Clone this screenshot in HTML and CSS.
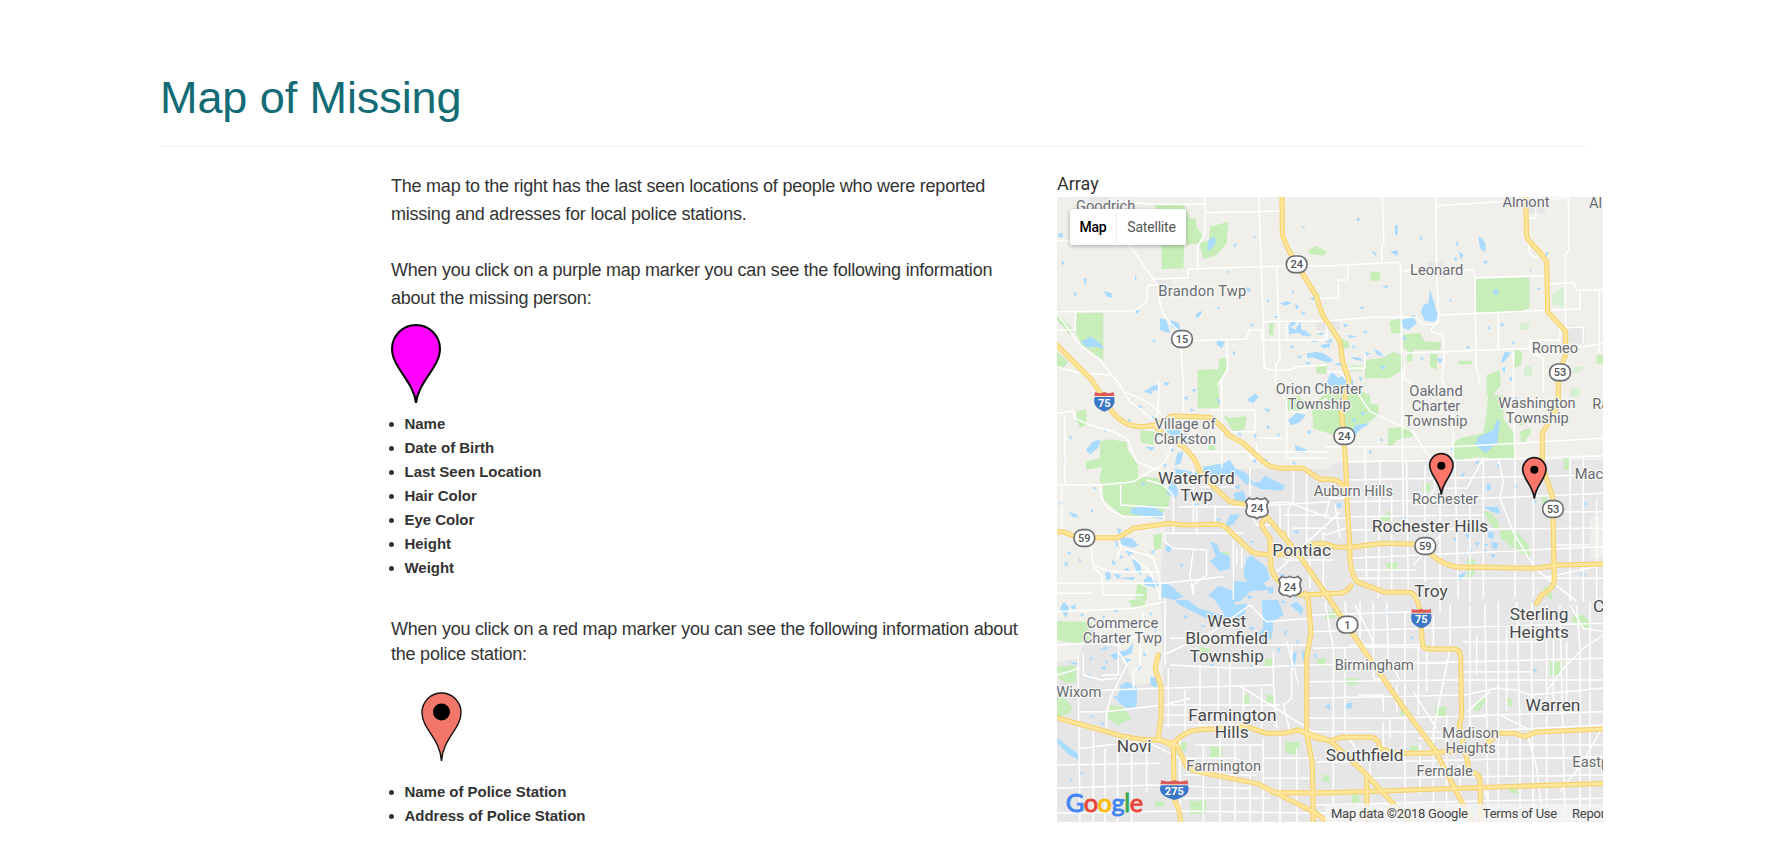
FILE: index.html
```html
<!DOCTYPE html>
<html lang="en">
<head>
<meta charset="utf-8">
<title>Map of Missing</title>
<link rel="stylesheet" href="styles.css">
</head>
<body>
<main class="page">
<h1 class="title">Map of Missing</h1>
<div class="columns">
<section class="info">
<p class="lead">The map to the right has the last seen locations of people who were reported<br>missing and adresses for local police stations.</p>
<p class="lead">When you click on a purple map marker you can see the following information<br>about the missing person:</p>
<svg class="pin-purple" viewBox="0 0 50 80"><path d="M25 79C23 58 1 43 1 25A24 24 0 0 1 49 25C49 43 27 58 25 79Z" fill="#f0f" stroke="#000" stroke-width="2"/></svg>
<ul class="facts"><li>Name</li><li>Date of Birth</li><li>Last Seen Location</li><li>Hair Color</li><li>Eye Color</li><li>Height</li><li>Weight</li></ul>
<p class="lead tight">When you click on a red map marker you can see the following information about<br>the police station:</p>
<svg class="pin-red" viewBox="0 0 41 70"><path d="M20.500 69C19 46 1 37 1 20.500A19.500 19.500 0 0 1 40 20.500C40 37 22 46 20.500 69Z" fill="#f3766a" stroke="#111" stroke-width="1.400"/><circle cx="20.500" cy="20" r="8.500"/></svg>
<ul class="facts"><li>Name of Police Station</li><li>Address of Police Station</li></ul>
</section>
<section class="map-col">
<div class="map-caption">Array</div>
<div class="map">
<svg class="map-art" viewBox="21 96 1638 1875">
<defs>
<g id="route"><rect x="-31" y="-25" width="62" height="50" rx="24" fill="#fff" stroke="#6b6e72" stroke-width="5"/></g>
<g id="us"><path d="M-24-30Q-12-22 0-30Q12-22 24-30L34-19Q26-8 33 8Q34 22 18 26Q6 26 0 32Q-6 26-18 26Q-34 22-33 8Q-26-8-34-19Z" fill="#fff" stroke="#6b6e72" stroke-width="5"/></g>
<g id="inter"><path d="M-29-12H29Q38 18 0 32Q-38 18-29-12Z" fill="#3c78c8"/><path d="M-28-27Q-14-20 0-27Q14-20 28-27L30-15H-30Z" fill="#df5a5a"/></g>
<g id="pin"><path d="M0 92C-3 52-35 34-35 4A35 35 0 0 1 35 4C35 34 3 52 0 92Z" fill="#fe7569" stroke="#181818" stroke-width="5"/><circle cy="5" r="12"/></g>
<g id="highways">
<path d="M696 90L697 210Q715 260 740 297L800 395Q815 455 835 475L870 530L878 590L897 645L875 745L887 895L893 1045L900 1145Q896 1215 920 1250Q960 1265 1005 1282H1080Q1105 1290 1112 1355L1117 1435Q1117 1452 1140 1452H1210Q1232 1452 1232 1480L1235 1655L1228 1680L1255 1805L1262 1822Q1290 1825 1290 1850L1293 1975"/>
<path d="M15 535L80 600L125 645L190 745Q225 785 275 785L320 780L365 753L480 757Q520 785 535 810L580 835L650 898Q670 910 700 910H760L810 943H840Q880 945 887 985"/>
<path d="M315 783L345 812L400 845Q435 875 450 920L490 965L540 1010L600 1020L650 1055L740 1160L840 1305L900 1395L955 1475L1065 1635L1155 1755L1268 1975"/>
<path d="M15 1100H40Q70 1115 100 1118H205L250 1090L360 1075L400 1080L500 1078Q525 1080 540 1100L605 1160Q620 1168 640 1168H740Q770 1135 820 1135L860 1147H900L1000 1135L1090 1137Q1130 1145 1145 1170Q1180 1200 1225 1207H1300L1455 1210L1530 1200L1665 1197"/>
<path d="M648 1058Q628 1072 640 1092L660 1120L663 1205Q670 1240 700 1260Q730 1290 760 1290L860 1285Q890 1285 903 1262M700 1105Q710 1135 745 1165"/>
<path d="M765 1285L775 1305L783 1405L770 1475V1705L787 1795L790 1975"/>
<path d="M1427 90L1430 215Q1440 235 1470 262L1490 290L1493 440L1547 500V570L1525 630V720L1477 805V905L1508 995L1513 1245Q1512 1270 1475 1290L1460 1315"/>
<path d="M15 1657L170 1700Q240 1725 320 1725L370 1735Q400 1700 440 1695L590 1685L650 1705H700L745 1695L800 1720L840 1727L875 1717H965Q985 1720 990 1750L1030 1765H1120L1195 1760L1300 1745L1345 1705H1395L1425 1715L1455 1702L1665 1692"/>
<path d="M325 1470L315 1510L333 1565V1655L325 1720L370 1745L372 1850L375 1910Q390 1930 392 1975M345 1730L380 1740L410 1805L440 1820L620 1855L790 1940L840 1975"/>
<path d="M670 1883H840L1230 1870L1665 1855M745 1695L840 1727L945 1825L1085 1975M950 1830V1975"/>
</g>
</defs>
<rect x="21" y="96" width="1638" height="1875" fill="#f0efea"/>
<path fill="#e6e6e6" d="M430 912H840L850 895L1290 885H1660V1050L1620 1060V1180H1660V1971H21V1490L90 1480L100 1420L190 1400L250 1560L340 1550L330 1240L345 1080V1000L430 960ZM120 96h65v20h-65zM315 345h50v30h-50zM1130 290h50v45h-50zM1425 125h60v20h-60zM1535 480h70v55h-70zM800 470h70v25h-70z"/>
<g fill="#c7edb9">
<path d="M308 118L400 115L420 160L437 158L440 190L462 215L445 235L402 240L400 310L335 312L334 240L350 160ZM480 185L535 170L530 235L500 270L460 282L447 235L478 225ZM80 443H160V585L95 540L77 500ZM21 445L72 495L60 510L21 465ZM21 560L55 590L40 610H21ZM443 615L505 612L510 580H530V610L505 660L508 730H443ZM775 255L800 243L830 260L820 272L780 266Z"/>
<path d="M657 475h14v35h-14zM962 320h28v27h-28zM1275 342L1438 337V430L1400 442H1278ZM1060 508L1110 505L1125 530H1175L1170 555H1090L1085 590L1070 588L1072 555L1060 550ZM945 585L1000 578L1030 560L1058 570V615L1015 640H945ZM1018 470L1055 458V505L1025 505ZM1310 630L1350 615L1352 660L1330 690H1310ZM1395 555L1418 560L1412 600L1393 610ZM1225 587h42v11h-42zM1640 570h19v26h-19zM800 600h30v26h-30zM1140 565l24 5-4 44-20-10zM875 520l22 12v18h-22z"/>
<path d="M150 830L175 823L230 830L235 860L262 895L265 935L335 940L360 990L355 1025L320 1060L215 1050L160 1005L158 955L148 950L155 905L108 915V890L150 880ZM80 738l28-5 3 45-20 10-11-20zM270 795l44 5-5 40-36-8zM520 750l20 8 50-4-6 40-35 6zM785 720L870 650L960 690V715L985 720V750L915 800L880 820L790 790ZM705 700l40-10 30 40-60 15zM475 840h20v15h-20zM310 1110l26-5-3 45-20 6zM510 1160l28 3-4 22-25-5z"/>
<path d="M1230 820L1300 805L1310 745L1315 690H1360V760L1395 810V880H1325L1280 875L1250 885H1208L1210 835ZM1015 790l60-6 16 30-50 10-15 20-12-4zM1010 1045L1020 1032 1020 1070 980 1065zM1350 1090L1400 1100L1435 1140L1440 1175L1410 1165L1352 1120ZM1295 1035l30 10 22 30v20l-20-10zM1470 990h20l5 30h-15zM1250 1180h20l8 20-10 45-15-5zM1005 1195l37-3v25h-25zM1120 955h23l-4 25h-20zM1540 880h20l-5 35h-13zM1480 1265h20l10 42-15-8zM1570 1350h30l25 25-5 20-55-25z"/>
<path d="M21 1368L130 1372L115 1395L125 1425L80 1435L21 1425ZM21 1590L45 1600L68 1630L60 1645L21 1655ZM180 1620L218 1625L245 1660L205 1680L172 1660ZM21 1505l55-4 3 50-30 3-25-15zM235 1305h50v20h-40zM445 1445l35 8 10 15-40-5zM577 1595l20-10v30h-20zM650 1590h22v22h-22zM480 1745h37v32h-37zM420 1907h50l-5 40h-43zM312 1910l30-2v17h-25zM385 1730l25 3-2 25-20-5zM645 1483l22-3v25h-22zM705 1732h45l-7 40-37-10z"/>
<path d="M825 1343l38-5-5 20-33 3zM885 1540h40v18h-40zM1052 1635l20-6v25h-20zM1155 1625h35v28h-35zM1270 1635l15-30 30-15-30 50zM1500 1490h40v40h-40zM1080 1742h22l4 18-28-4zM1370 1600h15v22h-15zM905 1890h22v25h-22zM1380 1870l22-2v16h-22zM1410 800l30-12 2 15-20 30-10-4zM1390 770l30-5-4 18zM262 1255l30 15-2 34h-35zM800 1485l25-8v30l-20-5zM820 1830h18v20h-18z"/>
</g>
<g fill="#d7efd2"><path d="M1510 385l35-18-4 40 4 20-40-10zM1410 475h30l-5 20-25-2zM1425 603h18l4 30h-25zM1575 605h30l-20 20-20-2zM900 600h35v20h-35zM1560 670h30v25h-30z"/></g>
<g fill="#a9daff">
<path d="M475 225l18-12 5 20-15 20-12 4zM92 530l30-15 30 20 10 18-22-8-30 2zM330 460l20 5 10 40-30-10zM362 465l25 10 5 25-30-15zM440 445l18-8-10 18-13 3zM1120 420l15-5 5-40 10 30 10 35 10 20-20 10-25-3-12-25zM1285 215l12 5 10 18-2 25-15-15zM1225 258l16 12-8 14zM1055 465l35-10 10 20-25 20-15-5zM845 620l20 20 25-15 20 20v25l-60 10-20-30zM790 560l30 5 30 20-15 8-45-15zM1158 578l20 5-8 12zM500 525l24 5-8 20-15-10z"/>
<path d="M108 855l20-25 24-7-7 25-25 20zM245 1030l60-10 35 25-5 18-40-8-55-10zM205 1115l40 5 20 20-15 8-35-8zM300 665l22-6 5 15-25 5zM590 705l25-20 10 10-15 20zM375 785l25 20 30 12-4 12-50-10-30-20zM382 865l18-5-8 35-18 7zM365 935l20 40-5 25-30-15zM375 910l70 15 10 20-40-8-35 2zM460 905l60-10 20-10 15 25 35 15 20 25-20 10-30-30-45 15-55-8zM600 955l30-5 15-18 60 30-8 15-65-5zM550 985l30-8 10 28-30 12zM735 840l35 15-5 10-28-4zM715 765l25-22 28 8-20 22-25 8zM540 1050l30-2-20 30-28 10zM480 1130l20 6 10 25 30 15v35l-30 8-30-30 18-15zM590 1180l15-8 45 35 10 35-20 12 20 20-60 5-30 30-50 8-45-25 30-30 45 15-4-30 45 5-10-35zM335 1255l25 5 40 35-25 10-40-8zM245 1180l25 12 5 40-15-10zM325 1465h10l-3 20zM635 1305h50l15 45-30 20-5 50-35 20-20-20 30-30zM375 1305h40l30 25 70 20 45-30 30-5-5 35-50 25-60-12-90-45zM490 1300h50l25 30-40 20zM30 1330l12-20 15 15-8 35zM205 1240l50-5-5 10zM290 1230l40 25-10 15-30-10zM720 1320l20-10 20 20-5 20zM755 1460l15-5-10 35zM725 1470l15-12-5 50-15-2z"/>
<path d="M212 1560l20-10 30 20-3 55-30 5-28-22zM180 1470l50-15 20-20-5 30-50 20zM22 1720l60 45 5 20-30-15-35-35zM300 1535l25 5-5 30-18-10zM150 1455l20-12 5 10zM1275 840l10-25 45-20 10-30 10 3-8 65-35 30zM895 820l20-40 45-5-25 15-25 25zM1300 1025l45 0 5 20-25-4zM1315 1100l18 3-5 20-15-5zM1325 1130l20 5-5 20-15-8zM1225 1230l25-10-15 25-15 4zM1270 900l20-20-4 15zM1395 695l10 10-5 30-15-10zM1450 1512h10v10h-10zM890 1615l20-2-5 15-20 5zM825 1625l15-10v20z"/>
<path d="M715 480l20 15 15-25 5 25 30 15-12 5-30-12-25 5zM770 565l30-4 3 14-30 5zM810 540l30-5v12l-20 3zM690 415l20-6 15 5-20 8zM735 415l12 10-8 10zM590 365l15 10-12 10zM550 240l10-8-4 18zM100 340l10 2-4 22zM160 378l24 6 3 14-16-3zM70 380l10 6-5 12zM35 285l9 8-8 10zM300 523l18 4-2 7zM255 430l14 8-11 10zM25 205h14v12h-14zM925 155l6 12h-12zM1035 180h8v30h-8zM965 260h10l4 15zM1020 260l25-5-4 17zM1300 285l14 3-9 12zM1485 265l10-4-5 16zM995 365l20-5-4 10zM1330 372l15 2-2 16-12-2zM925 425l20 1-8 7zM890 510l30 4-20 6zM970 550l18 10 15 15-20-5zM1385 530h12l-8 10zM1365 560l18 3-22 30-8-3zM1250 543h8v8h-8zM1310 490l8-6 4 10zM925 635l12 2-4 14z"/>
<path d="M280 680l20-10 7 18zM285 845l30 2-10 10zM500 700l12 5-5 14zM560 800l10-4 3 20zM640 730l20 3-4 12zM55 1040l25 8 5 10-18-3zM30 1010h8v10h-8zM350 1140l15 2-4 20-15-4zM200 1090l15 4-8 15zM40 1195l15-5-4 15zM85 1180l10 5-6 8zM165 1225l16-6 2 20-12 8zM50 1160l16 4-10 6zM730 1100l20-6-10 14zM690 1230l14-4-3 16zM655 1265h15v20h-15zM1310 960l12-4v20h-12zM1180 940l18-8-3 14zM1055 1050h12v12h-12zM860 1015h14v14h-14zM1390 960h12v8h-12zM1600 1010l12 6-8 8zM1300 1150l10 5-4 14zM1010 1320l6 30h-8zM1080 1420l12-10-3 14zM1590 1225h15v15zM845 1330l16 3-10 6zM120 1395l18 3-7 8zM120 1650l10 3-5 8zM150 1670l12 4-5 8zM55 1490l30 4-8 6zM110 1530l12-4-2 12zM590 1460l15 5-8 12zM700 1400l10-5v20z"/>
<path d="M255 328l6 18h-6zM525 320l12-3-5 8zM610 212l8 4-6 6zM690 163l8 3-5 6zM755 185l10-3-3 9zM500 425l12 5-8 4zM600 480l10-6v12zM550 555l8 12-9 3zM650 400l8 8-6 5zM725 375l8 5-6 6zM780 400l16-5-6 12zM755 440l14 4-12 7zM670 455l18-5-8 10zM720 540l14 4-9 8zM745 500l20-5 10 12-18 5zM730 465l10 8-15 12-8-6zM785 530l12-8 6 10zM740 575l15-4-5 10zM765 590l20 3-12 8zM800 510l18-10 2 10zM825 530l20-8v12zM850 600l25-10 2 12zM905 540l12 4-6 8zM935 500l18-3-6 9zM880 475l16 6-14 6zM1080 450l20 2-8 8zM1110 575l12 4-7 8zM900 575l30 3 10 10-24-3zM945 560l16 6-12 6zM990 600l18 6-10 9zM1055 520l12-6v14zM1200 400l6 10h-8zM1350 480l12-8-3 14zM1355 610l12-4-4 20zM1375 640l14-6-6 16zM1220 225l6 14-7 4zM1212 275l12 6-10 8zM1112 210l6 14h-8zM1440 310l5 6-5 4zM1460 370l14-3-7 8z"/>
<path d="M195 1120l10 18-6 10zM225 1155l25 8-14 9zM185 1185l14 8-10 9zM190 1225l24 6-10 12zM220 1215l14-8 4 12zM280 1240l14 4 4 20-14-4zM300 1160l14-6-4 14zM210 1170l12 8-12 3zM420 1160l12-5-2 16zM390 1195l12 4-9 9zM580 1225l14 8-10 10zM600 1125l16 6-10 4zM680 1150l12-3-4 15zM700 1280l10 10-14 3zM590 1290l20 6-14 8zM640 880l16 5-10 6zM605 890l12-8 2 12zM540 920l10 4 5 18-12-3zM480 935l20-4-6 12zM510 950l12 10-14 4zM405 985l10-3 2 12zM425 950l20 2-12 10zM550 965l20-6-3 14zM430 1020l18-5-8 12zM590 1010l14-4-4 12zM500 1060l14 3-10 8zM130 965l12 4-10 5zM125 1030l6 10h-8zM275 950l14 8-14 3zM340 895l12 5-10 8zM360 850l15 2-9 9zM300 760l12-8 3 14zM265 720l14 5-10 7zM235 760l10 8-10 4zM160 790l10 3-7 9zM60 810l8 8-10 6zM40 880l8 3-6 11zM420 730l12 4-8 8zM425 675l14-5-5 14zM340 650l20 4-12 10zM400 700l12-8 2 16zM650 780l12 6-9 8zM680 805l12 3-8 8zM610 810l10-4-2 16zM770 800l14-5-5 15zM725 895l10-7 3 12z"/>
<path d="M90 1345l14 4-9 7zM60 1325l18-8-4 18zM155 1350l12 4-7 8zM190 1335l14-3-6 12zM300 1340l10 6-9 6zM310 1390l12-4-4 16zM225 1480l20 4-14 10zM150 1510l16-8v15zM260 1500l14 3-6 14zM280 1460l10 10-10 6zM165 1485l10 4-7 10zM120 1475l8 5-6 9zM245 1590l14 6-6 10zM190 1595l12-3-3 14zM400 1350l14 4-9 9zM450 1380l18 2-8 8zM595 1385l20 2-8 10zM605 1430l14-4-2 14zM680 1450l12-4-4 18zM740 1420l8 12-8 6zM690 1310l12-4 6 12zM730 1290l14 4-8 9zM790 1470l10-4v18zM600 1500l12 4-9 7zM480 1500l14-5-6 14zM90 1820l12 3-8 7zM60 1840l10 3-6 7z"/>
<path d="M1245 1110l14-5-4 18zM1275 1130l14 4-8 12zM1210 1120l10-4-1 16zM1320 1165l16 5-8 10zM1300 1135l14 3-5 9zM1260 1150l8 3-6 10zM1165 1110l12 4-9 7zM1240 1160l12 4-8 6zM1085 985l8-4v10zM1340 900l12-4-6 12zM1450 1005l12 4-8 6zM1475 860l10 3-7 9zM955 860l10-4-2 15zM905 760l16 4-9 10zM930 745l14-5-3 12zM990 820l10 4-7 7zM1200 850l10-6-2 14zM1230 930l14-9-4 14z"/>
</g>
<g class="minor">
<path d="M465 96V205L443 245V310M180 105L300 118H463M468 143L690 138M626 96L640 470L642 600Q645 615 665 615H720L740 605L830 600M21 228H230L245 250L320 355L330 410Q335 460 390 500L400 660V740M305 343L415 338V312L700 303H825L1040 292Q1052 295 1052 310L1060 1100M320 360H295Q290 365 290 380V410L255 437L21 440M680 303L690 580L677 600V660L710 710V880M640 470L830 468L960 457H1100L1115 478H1160L1165 450L1590 432V378M430 527L590 522L597 495H635V525H830M532 528V615L503 660M21 445L90 540L150 585L185 630L215 665M21 605L90 625L185 630M76 445V495H21M710 475V520M810 400H840M893 297V345H865V400H830M830 465V525"/>
<path d="M997 96L1002 235L995 245V290M1158 96L1160 330L1167 470L1145 490V500L1180 510L1182 590L1175 640L1210 745V885M1162 122L1430 105L1555 100L1557 255L1546 270V430L1550 600M1060 320L1080 315H1265L1275 330L1278 600L1290 660M1275 338L1490 332M1490 358L1570 352L1580 375H1660M1648 375V560M1345 445V550M1065 565L1380 552L1600 545L1660 535M1390 560V670L1395 900M1440 525H1530V490L1600 485V535M1440 525V560L1480 580V680M1436 215V255Q1440 275 1465 278M1430 160H1457V130M830 620H870L920 680L960 740L1090 800L1120 850L1150 890L1155 970L1130 1010L1100 1020M885 610H945V565M1065 600L1060 640L1090 660"/>
<path d="M21 745L70 738L75 760L120 780L190 800L230 820L260 890L320 915L345 890L370 830M45 750V960M21 960H150L250 950L325 905M150 960Q150 1005 175 1030L220 1055H345M35 960V1100M212 960V1020L300 1025L360 1030M290 945L340 960L370 990V1110M225 680L290 710L330 740V750M325 645Q330 720 315 770M200 645L240 710L330 780M515 645V910M480 735H615V800H540M410 860H830M430 915V1075M600 990V910M625 820H700M620 835V870L600 880V850M555 965H450M385 1025H590L840 1010M440 1020V1110M495 1020V1075M600 1040L620 1080H660M345 1105H580M345 1105V1130L370 1150L470 1155M550 1125V1305M470 1155V1230L430 1260V1290M430 1155L420 1230L430 1290M560 1150V1200M575 1150V1210M120 1120L130 1200L180 1220H330M205 1120L215 1150L290 1170L310 1180L330 1240V1305M215 1145L200 1180M245 1175L300 1220L330 1290M21 1255H345L520 1235M130 1205L155 1230L160 1290H280M21 1285H130"/>
<path d="M715 880L830 880M710 740H760L830 700M730 910V1010L715 1030V1120M770 910V1140M660 1015L710 1010L840 1060M690 1020V1110M700 1050H840M725 1090H830M740 1160L850 1060L870 1040M680 1220L735 1170M700 1185H850M780 1165V1270M820 1100V1300M850 960L825 1060M840 1000H890M840 1060H900M825 1110L900 1085M855 1020L870 1120"/>
<path d="M825 845H1210L1660 820M887 890L1280 885L1660 872M890 945L1240 938L1660 930M890 1010L1180 1005L1660 985M895 1055L1300 1050M900 1095L1660 1090M900 1180L1660 1145M900 1215L1100 1215M910 1240L1660 1240M945 845L950 1245M990 890L985 1300M1025 960V1290M1070 885L1075 1290M1125 900V1250M1170 1000V1340M1215 880L1225 1300M1260 1000V1310M1300 880V1300M1345 880L1360 950L1350 1000L1390 1100L1430 1170L1455 1210L1580 1310M1395 890V1300M1450 890V1300M1560 870V1310M1600 870V1310M1640 1000V1310M1475 1240L1660 1200M1515 1040H1660M1515 1140H1620M1090 1200L1180 1100L1260 1070M1180 970L1250 970L1300 880M1130 1010H1260L1290 990"/>
<path d="M21 1340L250 1330L345 1310M21 1440L120 1435L205 1440L280 1400V1340M345 1300V1500M205 1460L230 1500L185 1590L170 1640V1700M100 1465V1530L155 1545L200 1540M205 1440V1530H155M85 1470V1580L90 1970M21 1580L330 1570L670 1560M165 1640L340 1620H690M90 1640H165M21 1530L90 1510M250 1570V1520L270 1500V1440M90 1750L300 1725M21 1800L330 1795M130 1690V1971M165 1750V1971M203 1700V1971M245 1740V1971M290 1720V1880M21 1870L300 1860L600 1870M21 1945L390 1938L840 1945M340 1470L480 1405L600 1320L650 1370L780 1360M360 1500L560 1510L770 1500M360 1420H500L580 1440H780M355 1510V1690M405 1575V1700M450 1500V1690M505 1510V1680M540 1490V1690M580 1560V1680M635 1560V1700M670 1550L680 1690M565 1560L790 1700M725 1440V1600L700 1620L720 1700M670 1460V1550M710 1430L745 1555M340 1620L420 1600M390 1710V1971M435 1740H640M460 1740V1971M510 1720V1971M555 1700V1971M600 1740V1971M640 1720V1971M690 1700V1971M740 1750V1971M640 1780H800M400 1780H560L640 1820M300 1735L390 1780M400 1830H620M640 1840H780M400 1900H660M340 1680H600M340 1650H460"/>
<path d="M785 1350L1110 1340M780 1400L1660 1375M790 1450L980 1445L1200 1450M780 1500L1070 1495L1660 1480M775 1550L1230 1545L1660 1545M775 1600L1240 1590L1340 1570L1400 1575L1440 1590L1660 1570M775 1660L1020 1660L1660 1640M775 1700H1240M1000 1790L1660 1775M800 1790H950M950 1840L1660 1830M790 1920L1660 1900M800 1960H1660M825 1310L850 1450V1971M885 1310L890 1390M885 1450V1700L1000 1700M970 1310V1540L1030 1550M1010 1310L1015 1480L1050 1545M915 1320L970 1430M1065 1340V1971M1105 1450V1650M1150 1350V1450M1200 1450L1150 1700V1971M1090 1580L1160 1690M1040 1560V1640M1190 1650V1971M1260 1320V1700M1305 1320L1315 1971M1345 1310V1971M1400 1310L1410 1700V1971M1445 1315V1560L1450 1971M1490 1320V1971M1530 1320L1545 1971M1580 1320L1590 1450V1971M1620 1310V1971M1560 1320L1600 1390L1660 1400M1490 1580L1540 1510L1600 1450L1660 1410M1250 1640L1320 1580M1270 1700L1660 1680M1430 1700L1460 1810L1480 1971M1530 1880L1600 1790L1660 1680M1240 1520H1440M1260 1740H1660M1300 1860L1330 1971"/>
<path d="M900 1440H1110V1310M925 1590H1000V1640M930 1310V1420M1000 1670V1750M1020 1660V1720M960 1760V1830M930 1820V1760M885 1700L935 1780M1105 1720H1230M1110 1735V1890M1230 1800V1960M1370 1720V1830M1240 1430H1480M1370 1390V1640M1200 1320V1440M1280 1410V1530M1510 1420V1640M1550 1430V1640M1130 1460V1580M1350 1650L1430 1690"/>
</g>
<use href="#highways" class="casing"/><use href="#highways" class="highway"/>
<g class="town">
<text x="167" y="138">Goodrich</text><text x="457" y="392" textLength="264">Brandon Twp</text><text x="1160" y="330">Leonard</text><text x="1428" y="126">Almont</text><text x="1617" y="129" class="start">Al</text><text x="1515" y="564">Romeo</text>
<text x="808" y="687">Orion Charter</text><text x="808" y="733">Township</text><text x="405" y="793">Village of</text><text x="405" y="838">Clarkston</text><text x="1158" y="692">Oakland</text><text x="1158" y="738">Charter</text><text x="1158" y="783">Township</text><text x="1461" y="728">Washington</text><text x="1462" y="773">Township</text><text x="1627" y="731" class="start">Ra</text><text x="1574" y="943" class="start">Mac</text><text x="910" y="992">Auburn Hills</text><text x="1185" y="1018">Rochester</text>
<text x="217" y="1388">Commerce</text><text x="217" y="1433">Charter Twp</text><text x="19" y="1596" class="start">Wixom</text><text x="521" y="1819">Farmington</text><text x="973" y="1515">Birmingham</text><text x="1262" y="1718">Madison</text><text x="1262" y="1763">Heights</text><text x="1184" y="1834">Ferndale</text><text x="1567" y="1807" class="start">Eastp</text>
</g>
<g class="city">
<text x="439" y="957">Waterford</text><text x="440" y="1009">Twp</text><text x="667" y="1174" class="start">Pontiac</text><text x="1140" y="1102">Rochester Hills</text><text x="1143" y="1296">Troy</text><text x="530" y="1385">West</text><text x="530" y="1438">Bloomfield</text><text x="530" y="1490">Township</text><text x="547" y="1667">Farmington</text><text x="545" y="1720">Hills</text><text x="252" y="1761">Novi</text><text x="944" y="1788">Southfield</text><text x="1467" y="1365">Sterling</text><text x="1467" y="1418">Heights</text><text x="1509" y="1637">Warren</text><text x="1629" y="1341" class="start">C</text>
</g>
<g class="shields">
<g transform="translate(740 298)"><use href="#route"/><text y="12">24</text></g><g transform="translate(396 522)"><use href="#route"/><text y="12">15</text></g><g transform="translate(1530 622)"><use href="#route"/><text y="12">53</text></g><g transform="translate(883 813)"><use href="#route"/><text y="12">24</text></g><g transform="translate(103 1119)"><use href="#route"/><text y="12">59</text></g><g transform="translate(1126 1143)"><use href="#route"/><text y="12">59</text></g><g transform="translate(1509 1032)"><use href="#route"/><text y="12">53</text></g><g transform="translate(892 1379)"><use href="#route"/><text y="12">1</text></g>
<g transform="translate(621 1029)"><use href="#us"/><text y="13">24</text></g><g transform="translate(720 1264)"><use href="#us"/><text y="13">24</text></g>
<g class="interstate"><g transform="translate(163 708)"><use href="#inter"/><text y="17">75</text></g><g transform="translate(1114 1358)"><use href="#inter"/><text y="17">75</text></g><g transform="translate(373 1873)"><use href="#inter" transform="scale(1.400 1)"/><text y="17">275</text></g></g>
</g>
<use href="#pin" transform="translate(1174 897)"/><use href="#pin" transform="translate(1453 909)"/>
<text class="logo" x="47" y="1942" textLength="232"><tspan fill="#4285f4" stroke="#4285f4">G</tspan><tspan fill="#ea4335" stroke="#ea4335">o</tspan><tspan fill="#fbbc05" stroke="#fbbc05">o</tspan><tspan fill="#4285f4" stroke="#4285f4">g</tspan><tspan fill="#34a853" stroke="#34a853">l</tspan><tspan fill="#ea4335" stroke="#ea4335">e</tspan></text>
</svg>
<div class="map-types"><span class="type active">Map</span><span class="type">Satellite</span></div>
<div class="credits"><span>Map data ©2018 Google</span><span>Terms of Use</span><span>Repor</span></div>
</div>
</section>
</div>
</main>
</body>
</html>
```
FILE: styles.css
```css
html, body { margin: 0; height: 857px; overflow: hidden; background: #fff; }
body { font-family: "Liberation Sans", Arial, sans-serif; color: #333; }
.page { width: 1425px; margin-left: 160px; padding-top: 72px; }
.title { margin: 0; height: 74px; border-bottom: 1px solid #eee; font-size: 45px; line-height: 52px; font-weight: 400; letter-spacing: -0.08px; color: #126b75; }
.columns { display: grid; grid-template-columns: 635px 546px; gap: 31px; padding-left: 231px; }
.info { padding-top: 25px; }
.lead { margin: 0 0 28px; font-size: 18px; line-height: 28px; letter-spacing: -0.228px; white-space: nowrap; }
.lead.tight { line-height: 25px; margin: 37px 0 25px; }
.pin-purple { display: block; width: 50px; height: 80px; margin-top: -16px; }
.pin-red { display: block; width: 41px; height: 70px; margin: 0 0 18px 30px; }
.facts { list-style: none; margin: 8px 0 0; padding: 0; font-size: 15px; line-height: 24px; font-weight: 700; letter-spacing: -0.03px; }
.facts li { display: flex; align-items: center; gap: 10.500px; margin-left: -2px; }
.facts li::before { content: ""; width: 5px; height: 5px; border-radius: 50%; background: #333; }
.map-col { padding-top: 24px; }
.map-caption { height: 26px; font: 18px/26px Roboto, sans-serif; }
.map { position: relative; width: 546px; height: 625px; overflow: hidden; font-family: Roboto, sans-serif; }
.map-art { display: block; width: 546px; height: 625px; }
.minor { fill: none; stroke: #fff; stroke-width: 4.500; stroke-linejoin: round; }
.casing, .highway { fill: none; stroke-linejoin: round; stroke-linecap: round; }
.casing { stroke: #f6cf65; stroke-width: 15; }
.highway { stroke: #ffe69a; stroke-width: 9; }
.map-art text { text-anchor: middle; }
.map-art text.start { text-anchor: start; }
.town text, .city text { paint-order: stroke; stroke: #f7f7f5; stroke-width: 7; stroke-linejoin: round; }
.town { font-size: 44px; fill: #686b70; }
.city { font-size: 52px; fill: #47494c; }
.shields { font-size: 33px; font-weight: 500; fill: #505358; }
.interstate { fill: #fff; font-weight: 700; }
.map-art .logo { font-family: Lato, sans-serif; font-size: 76px; font-weight: 400; text-anchor: start; stroke-width: 2.500; }
.map-types { position: absolute; left: 13px; top: 12px; display: flex; height: 36px; border-radius: 2px; background: #fff; box-shadow: 0 1px 4px rgba(0,0,0,.3); font-size: 14px; line-height: 36px; color: #565656; }
.type { width: 69px; text-align: center; letter-spacing: -0.200px; }
.type.active { width: 46px; border-right: 1px solid #eee; color: #000; font-weight: 500; }
.credits { position: absolute; left: 268px; bottom: 0; display: flex; gap: 15px; width: 266px; height: 18px; padding: 0 6px; background: rgba(245,245,245,.8); font-size: 13px; line-height: 19px; letter-spacing: -0.230px; color: #444; white-space: nowrap; }
```
